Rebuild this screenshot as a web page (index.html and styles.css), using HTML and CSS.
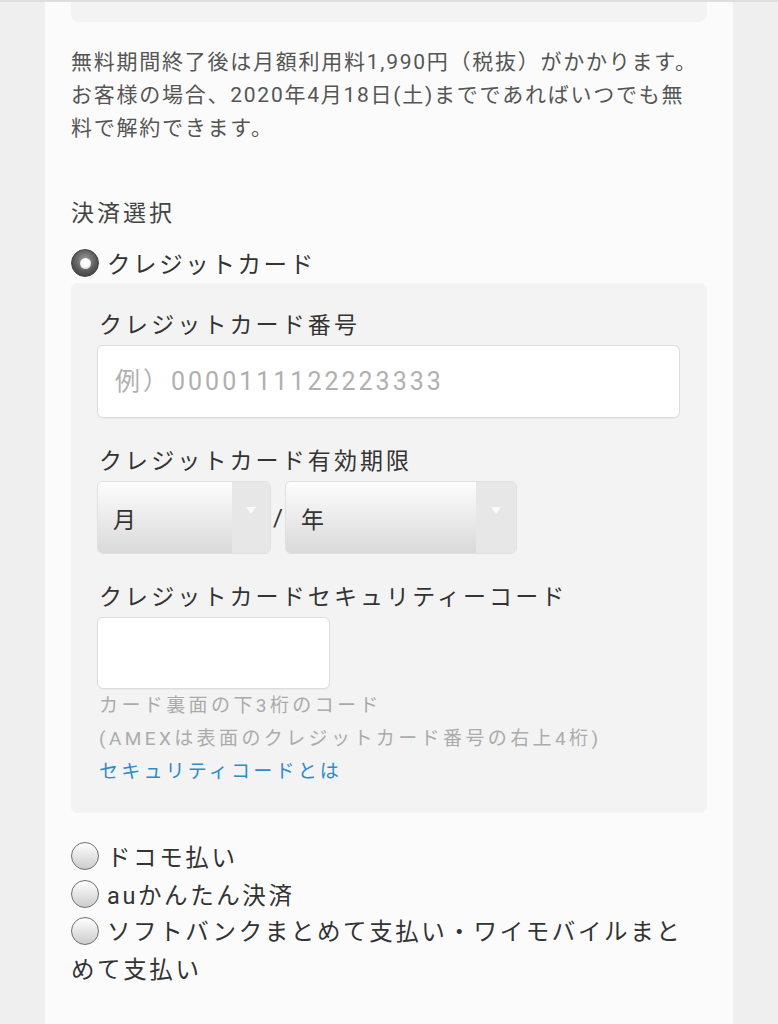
FILE: index.html
```html
<!DOCTYPE html>
<html lang="ja">
<head>
<meta charset="utf-8">
<link rel="stylesheet" href="styles.css">
</head>
<body>
<div class="topline"></div>
<div class="column">
  <div class="prev-box"></div>
  <p class="notice">無料期間終了後は月額利用料1,990円（税抜）がかかります。<br>お客様の場合、2020年4月18日(土)までであればいつでも無<br>料で解約できます。</p>
  <h2 class="heading">決済選択</h2>
  <div class="radio-row"><span class="radio checked"></span><span class="radio-label">クレジットカード</span></div>
  <div class="panel">
    <div class="label first">クレジットカード番号</div>
    <input class="field wide" type="text" placeholder="例）0000111122223333">
    <div class="label">クレジットカード有効期限</div>
    <div class="expiry">
      <div class="select month"><span class="select-text">月</span><span class="select-arrow"><span class="tri"></span></span></div>
      <span class="slash">/</span>
      <div class="select year"><span class="select-text">年</span><span class="select-arrow"><span class="tri"></span></span></div>
    </div>
    <div class="label">クレジットカードセキュリティーコード</div>
    <input class="field short" type="text">
    <div class="hint">カード裏面の下3桁のコード</div>
    <div class="hint">(AMEXは表面のクレジットカード番号の右上4桁)</div>
    <a class="link" href="#">セキュリティコードとは</a>
  </div>
  <div class="options">
    <div class="radio-row opt"><span class="radio"></span><span class="radio-label">ドコモ払い</span></div>
    <div class="radio-row opt"><span class="radio"></span><span class="radio-label">auかんたん決済</span></div>
    <div class="opt-wrap"><span class="radio inline"></span>ソフトバンクまとめて支払い・ワイモバイルまと<br>めて支払い</div>
  </div>
</div>
</body>
</html>
```
FILE: styles.css
```css
html, body {
  margin: 0;
  padding: 0;
}
body {
  background: #efefef;
  font-family: "Roboto", "Noto Sans CJK JP", "Noto Sans", sans-serif;
  color: #333;
  height: 1024px;
  overflow: hidden;
}
.topline {
  height: 2px;
  background: #dedede;
}
.column {
  width: 636px;
  margin-left: 45px;
  padding: 0 26px;
  background: #fbfbfb;
  height: 1022px;
}
.prev-box {
  height: 20px;
  background: #f3f3f3;
  border-radius: 0 0 8px 8px;
}
.notice {
  margin: 24px 0 0 0;
  font-size: 21px;
  line-height: 33px;
  letter-spacing: 1.75px;
  color: #555;
  white-space: nowrap;
}
.heading {
  margin: 52px 0 0 0;
  font-size: 23px;
  font-weight: normal;
  line-height: 34px;
  letter-spacing: 3px;
  color: #444;
}
.radio-row {
  display: flex;
  align-items: center;
  height: 40px;
  margin-top: 12px;
}
.radio {
  display: inline-block;
  width: 28px;
  height: 28px;
  border-radius: 50%;
  box-sizing: border-box;
  border: 1.5px solid #6f6f6f;
  background: linear-gradient(#ffffff, #cccccc);
  margin-left: 0;
  margin-right: 8px;
  flex: none;
}
.radio.checked {
  position: relative;
  border: 1px solid #444;
  background: radial-gradient(circle at 50% 40%, #a0a0a0 0%, #5a5a5a 55%, #333 100%);
}
.radio.checked::after {
  content: "";
  position: absolute;
  left: 7.5px;
  top: 7.5px;
  width: 11px;
  height: 11px;
  border-radius: 50%;
  background: radial-gradient(circle at 50% 40%, #ffffff 40%, #c8c8c8 100%);
}
.radio-label {
  font-size: 23.5px;
  letter-spacing: 2.6px;
  color: #333;
}
.panel {
  background: #f3f3f3;
  border-radius: 6px;
  padding: 26px 26px 25px 26px;
}
.label {
  font-size: 23px;
  line-height: 34px;
  letter-spacing: 3.1px;
  color: #333;
  padding-left: 2px;
  margin-top: 27px;
  margin-bottom: 2px;
}
.label.first {
  margin-top: 0;
}
.field {
  display: block;
  box-sizing: border-box;
  height: 73px;
  border: 1px solid #dcdcdc;
  border-radius: 6px;
  background: #fff;
  font-family: "Roboto", "Noto Sans CJK JP", sans-serif;
  font-size: 25px;
  letter-spacing: 3px;
  padding: 0 17px;
  outline: none;
  box-shadow: 0 1px 1px rgba(0,0,0,0.04);
}
.field.wide {
  width: 583px;
}
.field.short {
  width: 233px;
  height: 72px;
  margin-top: 2px;
}
.field::placeholder {
  color: #b0b0b0;
}
.expiry {
  display: flex;
  align-items: center;
}
.select {
  display: flex;
  height: 73px;
  box-sizing: border-box;
  border: 1px solid #e0e0e0;
  border-radius: 6px;
  overflow: hidden;
}
.select.month {
  width: 174px;
}
.select.year {
  width: 232px;
}
.select-text {
  flex: 1;
  display: flex;
  align-items: center;
  padding-left: 15px;
  font-size: 23px;
  color: #333;
  background: linear-gradient(#fdfdfd, #d9d9d9);
}
.select-arrow {
  width: 38px;
  display: flex;
  justify-content: center;
  padding-top: 25px;
  box-sizing: border-box;
  background: #e7e7e7;
}
.year .select-arrow {
  width: 40px;
}
.tri {
  width: 0;
  height: 0;
  border-left: 5px solid transparent;
  border-right: 5px solid transparent;
  border-top: 7px solid #fafafa;
}
.slash {
  width: 14px;
  text-align: center;
  font-size: 24px;
  color: #333;
}
.hint {
  font-size: 19px;
  line-height: 33px;
  letter-spacing: 3.4px;
  color: #ababab;
  padding-left: 2px;
}
.link {
  display: block;
  font-size: 19px;
  line-height: 33px;
  letter-spacing: 3.2px;
  color: #2b8ccb;
  text-decoration: none;
  padding-left: 2px;
}
.options {
  margin-top: 24px;
}
.radio-row.opt {
  margin-top: 0;
  height: 38px;
}
.opt-wrap {
  font-size: 23.5px;
  line-height: 38px;
  letter-spacing: 2.6px;
  color: #333;
  white-space: nowrap;
}
.radio.inline {
  vertical-align: -5px;
}
```
